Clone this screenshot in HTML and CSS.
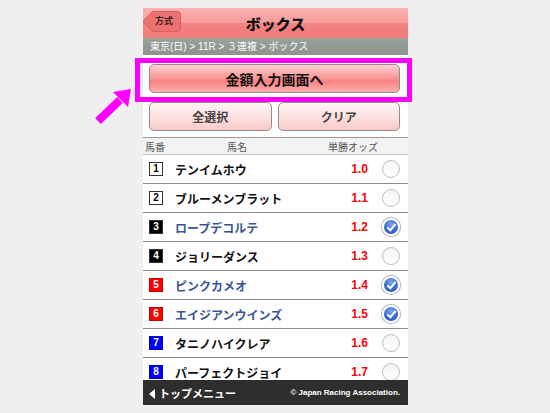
FILE: index.html
```html
<!DOCTYPE html>
<html lang="ja">
<head>
  <meta charset="UTF-8" />
  <meta name="viewport" content="width=device-width, initial-scale=1.0"/>
  <title>ボックス</title>
  <link rel="stylesheet" href="styles.css">
</head>
<body>
  <div class="stage">
    <div class="phone">
      <header class="nav">
        <a class="back">方式</a>
        <h1>ボックス</h1>
      </header>
      <div class="crumb">東京(日) &gt; 11R &gt; ３連複 &gt; ボックス</div>

      <div class="actions">
        <button class="btn-main">金額入力画面へ</button>
        <div class="btn-row">
          <button class="btn-sub">全選択</button>
          <button class="btn-sub">クリア</button>
        </div>
      </div>

      <div class="list">
        <div class="list-head">
          <span class="h-num">馬番</span>
          <span class="h-name">馬名</span>
          <span class="h-odds">単勝オッズ</span>
        </div>

        <div class="row">
          <span class="num w1">1</span><span class="name">テンイムホウ</span><span class="odds">1.0</span><span class="check"></span>
        </div>
        <div class="row">
          <span class="num w1">2</span><span class="name">ブルーメンブラット</span><span class="odds">1.1</span><span class="check"></span>
        </div>
        <div class="row on">
          <span class="num k">3</span><span class="name">ロープデコルテ</span><span class="odds">1.2</span><span class="check"></span>
        </div>
        <div class="row">
          <span class="num k">4</span><span class="name">ジョリーダンス</span><span class="odds">1.3</span><span class="check"></span>
        </div>
        <div class="row on">
          <span class="num r">5</span><span class="name">ピンクカメオ</span><span class="odds">1.4</span><span class="check"></span>
        </div>
        <div class="row on">
          <span class="num r">6</span><span class="name">エイジアンウインズ</span><span class="odds">1.5</span><span class="check"></span>
        </div>
        <div class="row">
          <span class="num b">7</span><span class="name">タニノハイクレア</span><span class="odds">1.6</span><span class="check"></span>
        </div>
        <div class="row">
          <span class="num b">8</span><span class="name">パーフェクトジョイ</span><span class="odds">1.7</span><span class="check"></span>
        </div>
      </div>

      <footer class="foot">
        <span class="top-link">トップメニュー</span>
        <span class="copy">© Japan Racing Association.</span>
      </footer>
    </div>

    <!-- annotation -->
    <div class="highlight"></div>
    <svg class="arrow" width="45" height="45" viewBox="0 0 45 45">
      <line x1="9" y1="35" x2="31" y2="14" stroke="#ff00ff" stroke-width="8"/>
      <polygon points="42,3 24,6 39,21" fill="#ff00ff"/>
    </svg>
  </div>
</body>
</html>
```

FILE: styles.css
```css
* {
  margin: 0;
  padding: 0;
  box-sizing: border-box;
}

body {
  background: #efefef;
  font-family: 'Liberation Sans', 'Noto Sans CJK JP', sans-serif;
}

.stage {
  position: relative;
  width: 550px;
  height: 413px;
  overflow: hidden;
}

.phone {
  width: 265px;
  height: 397px;
  margin: 8px 0 0 143px;
  background: #fff;
  display: flex;
  flex-direction: column;
  overflow: hidden;
}

/* nav bar */
.nav {
  height: 30px;
  flex-shrink: 0;
  position: relative;
  display: flex;
  align-items: center;
  justify-content: center;
  background: linear-gradient(#fbb3b3, #f79a9a 50%, #f48383 51%, #f27a7a);
}

.nav h1 {
  font-size: 15px;
  font-weight: 900;
  color: #111;
}

.back {
  position: absolute;
  left: 9px;
  top: 3px;
  height: 21px;
  width: 29px;
  padding-left: 3px;
  background: #ec7272;
  border: 1px solid #d96060;
  border-left: none;
  border-radius: 0 4px 4px 0;
  font-size: 9px;
  font-weight: bold;
  color: #3a2020;
  line-height: 19px;
  z-index: 1;
  isolation: isolate;
}

.back::before {
  content: "";
  position: absolute;
  left: -7px;
  top: 2px;
  width: 14px;
  height: 14px;
  background: #ec7272;
  border-left: 1px solid #d96060;
  border-bottom: 1px solid #d96060;
  transform: rotate(45deg);
  border-radius: 0 0 0 3px;
  z-index: -1;
}

/* breadcrumb */
.crumb {
  height: 17px;
  flex-shrink: 0;
  padding-left: 7px;
  background: linear-gradient(#9aa29c, #8a938c);
  color: #fff;
  font-size: 10px;
  line-height: 17px;
}

/* buttons */
.actions {
  flex-shrink: 0;
  padding: 9px 8px 6px 6px;
  display: flex;
  flex-direction: column;
  gap: 9px;
  border-bottom: 1px solid #999;
}

.actions button {
  font-family: 'Liberation Sans', 'Noto Sans CJK JP', sans-serif;
  font-weight: bold;
  border: 1px solid #8e8e8e;
  border-radius: 5px;
  height: 29px;
}

.btn-main {
  font-size: 14px;
  color: #111;
  background: linear-gradient(#fdd0d0, #fa9a9a 45%, #f98282 60%, #fbb0b0);
}

.btn-row {
  display: flex;
  gap: 6px;
}

.btn-sub {
  flex: 1;
  font-size: 12px;
  color: #444;
  background: linear-gradient(#fff4f4, #fde0e0 50%, #fbcaca);
}

/* list */
.list {
  flex: 1;
  overflow: hidden;
}

.list-head {
  height: 17px;
  display: flex;
  align-items: center;
  background: #f3f3f3;
  border-bottom: 1px solid #c8c8c8;
  font-size: 10px;
  color: #555;
}

.h-num {
  width: 31px;
  padding-left: 2px;
}

.h-name {
  flex: 1;
  text-align: center;
  padding-right: 28px;
}

.h-odds {
  width: 80px;
}

.row {
  height: 29px;
  display: flex;
  align-items: center;
  padding: 0 8px 0 6px;
  border-bottom: 1px solid #8c8c8c;
}

.num {
  width: 14px;
  height: 14px;
  flex-shrink: 0;
  font-size: 10px;
  font-weight: bold;
  text-align: center;
  line-height: 12px;
  border: 1px solid #333;
}

.num.w1 { background: #fff; color: #000; }
.num.k  { background: #000; color: #fff; }
.num.r  { background: #f00; color: #fff; border-color: #c00; }
.num.b  { background: #00f; color: #fff; border-color: #00c; }

.name {
  flex: 1;
  margin-left: 12px;
  font-size: 12px;
  font-weight: bold;
  color: #111;
}

.row.on .name {
  color: #3a5595;
}

.odds {
  color: #f00;
  font-size: 12px;
  font-weight: bold;
  margin-right: 14px;
}

.check {
  width: 18px;
  height: 18px;
  border-radius: 50%;
  border: 1px solid #bdbdbd;
  background: linear-gradient(#f4f4f4, #fff);
  position: relative;
}

.row.on .check {
  border: 2px solid #fff;
  box-shadow: 0 0 1px 1px #aab;
  background: radial-gradient(circle at 50% 30%, #7ea6ee, #3468d0 60%, #2452b5);
}

.row.on .check::after {
  content: "";
  position: absolute;
  left: 5px;
  top: 2px;
  width: 3px;
  height: 7px;
  border-right: 2px solid #fff;
  border-bottom: 2px solid #fff;
  transform: rotate(40deg);
}

/* footer */
.foot {
  height: 25px;
  flex-shrink: 0;
  display: flex;
  align-items: center;
  justify-content: space-between;
  padding: 0 8px 0 6px;
  background: #2e2e2e;
  color: #fff;
}

.top-link {
  font-size: 11px;
  font-weight: bold;
}

.top-link::before {
  content: "";
  display: inline-block;
  border-right: 6px solid #fff;
  border-top: 5px solid transparent;
  border-bottom: 5px solid transparent;
  margin: 0 4px 0 0;
  vertical-align: -1px;
}

.copy {
  font-size: 8px;
  font-weight: bold;
}

/* annotation overlay */
.highlight {
  position: absolute;
  left: 135px;
  top: 58px;
  width: 277px;
  height: 44px;
  border: 5px solid #ff00ff;
}

.arrow {
  position: absolute;
  left: 89px;
  top: 86px;
}
```
